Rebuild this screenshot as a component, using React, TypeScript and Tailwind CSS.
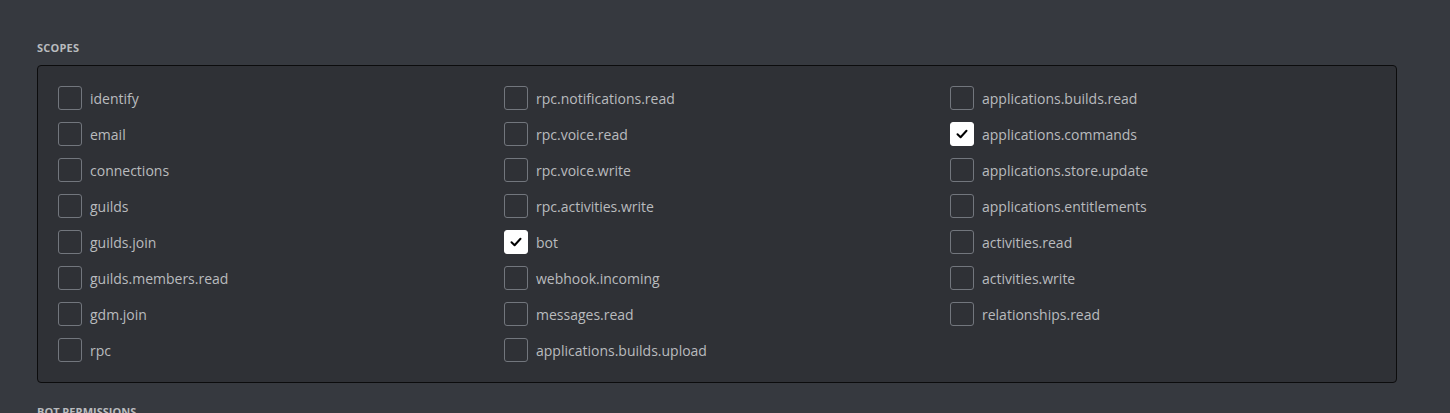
const columns: { name: string; checked?: boolean }[][] = [
  [
    { name: 'identify' },
    { name: 'email' },
    { name: 'connections' },
    { name: 'guilds' },
    { name: 'guilds.join' },
    { name: 'guilds.members.read' },
    { name: 'gdm.join' },
    { name: 'rpc' },
  ],
  [
    { name: 'rpc.notifications.read' },
    { name: 'rpc.voice.read' },
    { name: 'rpc.voice.write' },
    { name: 'rpc.activities.write' },
    { name: 'bot', checked: true },
    { name: 'webhook.incoming' },
    { name: 'messages.read' },
    { name: 'applications.builds.upload' },
  ],
  [
    { name: 'applications.builds.read' },
    { name: 'applications.commands', checked: true },
    { name: 'applications.store.update' },
    { name: 'applications.entitlements' },
    { name: 'activities.read' },
    { name: 'activities.write' },
    { name: 'relationships.read' },
  ],
];

function Checkbox({ checked }: { checked?: boolean }) {
  return (
    <div
      className={
        checked
          ? 'w-6 h-6 rounded-[3px] bg-white border border-white flex items-center justify-center shrink-0'
          : 'w-6 h-6 rounded-[3px] border border-[#72767d] shrink-0'
      }
    >
      {checked && (
        <svg width="14" height="14" viewBox="0 0 14 14" fill="none">
          <path d="M2.5 7.2 L5.6 10.2 L11.5 3.8" stroke="#000" strokeWidth="2" strokeLinecap="round" strokeLinejoin="round" />
        </svg>
      )}
    </div>
  );
}

export default function App() {
  return (
    <div
      className="min-h-[413px] bg-[#36393f] pl-[37px] pr-[53px] pt-[41px]"
      style={{ fontFamily: '"Open Sans", "Noto Sans", sans-serif' }}
    >
      <h5 className="text-[11px] leading-[14px] font-bold uppercase text-[#b9bbbe] mb-[10px] tracking-[0.02em]">Scopes</h5>
      <div className="bg-[#2f3136] border border-[#0c0c0d] rounded-[4px] pl-5 py-5 grid grid-cols-3">
        {columns.map((col, i) => (
          <div key={i} className="flex flex-col gap-3">
            {col.map((s) => (
              <label key={s.name} className="flex items-center gap-2 h-6 text-[14px] text-[#b9bbbe]">
                <Checkbox checked={s.checked} />
                <span>{s.name}</span>
              </label>
            ))}
          </div>
        ))}
      </div>
      <h5 className="mt-[22px] text-[11px] leading-[14px] font-bold uppercase text-[#b9bbbe]">Bot Permissions</h5>
    </div>
  );
}
